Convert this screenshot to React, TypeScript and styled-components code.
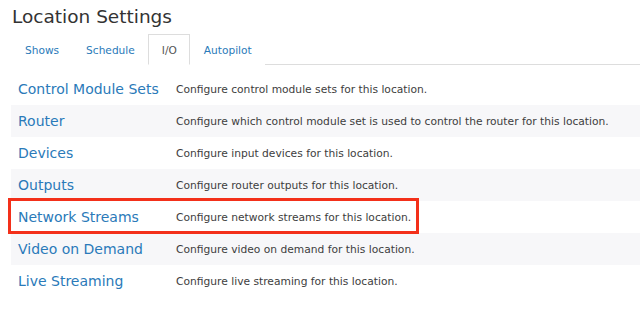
import styled, { createGlobalStyle } from "styled-components";

const GlobalStyle = createGlobalStyle`
    body {
        margin: 0;
        background: #ffffff;
        font-family: "DejaVu Sans", Verdana, sans-serif;
        color: #333333;
    }
`;

const Page = styled.div`
    position: relative;
    padding: 4px 0 0 11px;
`;

const Title = styled.h1`
    margin: 0 0 0 1px;
    font-size: 18.5px;
    font-weight: normal;
    line-height: 26px;
    color: #333333;
`;

const TabBar = styled.ul`
    display: flex;
    list-style: none;
    margin: 4px 0 0;
    padding: 0;
    border-bottom: 1px solid #dddddd;
    height: 30px;
`;

const Tab = styled.li<{ active?: boolean }>`
    display: flex;
    align-items: center;
    padding: 0 12px 0 13px;
    margin-bottom: -1px;
    font-size: 10.6px;
    color: ${p => (p.active ? "#555555" : "#2a7ab9")};
    background: #ffffff;
    border: 1px solid ${p => (p.active ? "#dddddd" : "transparent")};
    border-bottom-color: ${p => (p.active ? "#ffffff" : "transparent")};
`;

const Table = styled.div`
    margin-top: 8px;
`;

const Row = styled.div<{ striped?: boolean }>`
    display: flex;
    align-items: center;
    height: 32px;
    background: ${p => (p.striped ? "#f7f7f9" : "#ffffff")};
`;

const Name = styled.a`
    width: 158px;
    padding-left: 7px;
    font-size: 14px;
    color: #2a7ab9;
    text-decoration: none;
    white-space: nowrap;
`;

const Desc = styled.span`
    font-size: 10.7px;
    color: #3d3d3d;
    white-space: nowrap;
`;

const Highlight = styled.div`
    position: absolute;
    left: 8px;
    top: 198px;
    width: 405px;
    height: 30px;
    border: 3px solid #f3301a;
    pointer-events: none;
`;

const tabs = ["Shows", "Schedule", "I/O", "Autopilot"];

const items = [
    ["Control Module Sets", "Configure control module sets for this location."],
    ["Router", "Configure which control module set is used to control the router for this location."],
    ["Devices", "Configure input devices for this location."],
    ["Outputs", "Configure router outputs for this location."],
    ["Network Streams", "Configure network streams for this location."],
    ["Video on Demand", "Configure video on demand for this location."],
    ["Live Streaming", "Configure live streaming for this location."],
];

function App() {
    return (
        <Page>
            <GlobalStyle />
            <Title>Location Settings</Title>
            <TabBar>
                {tabs.map(t => (
                    <Tab key={t} active={t === "I/O"}>{t}</Tab>
                ))}
            </TabBar>
            <Table>
                {items.map(([name, desc], i) => (
                    <Row key={name} striped={i % 2 === 1}>
                        <Name href="#">{name}</Name>
                        <Desc>{desc}</Desc>
                    </Row>
                ))}
            </Table>
            <Highlight />
        </Page>
    );
}

export default App;
